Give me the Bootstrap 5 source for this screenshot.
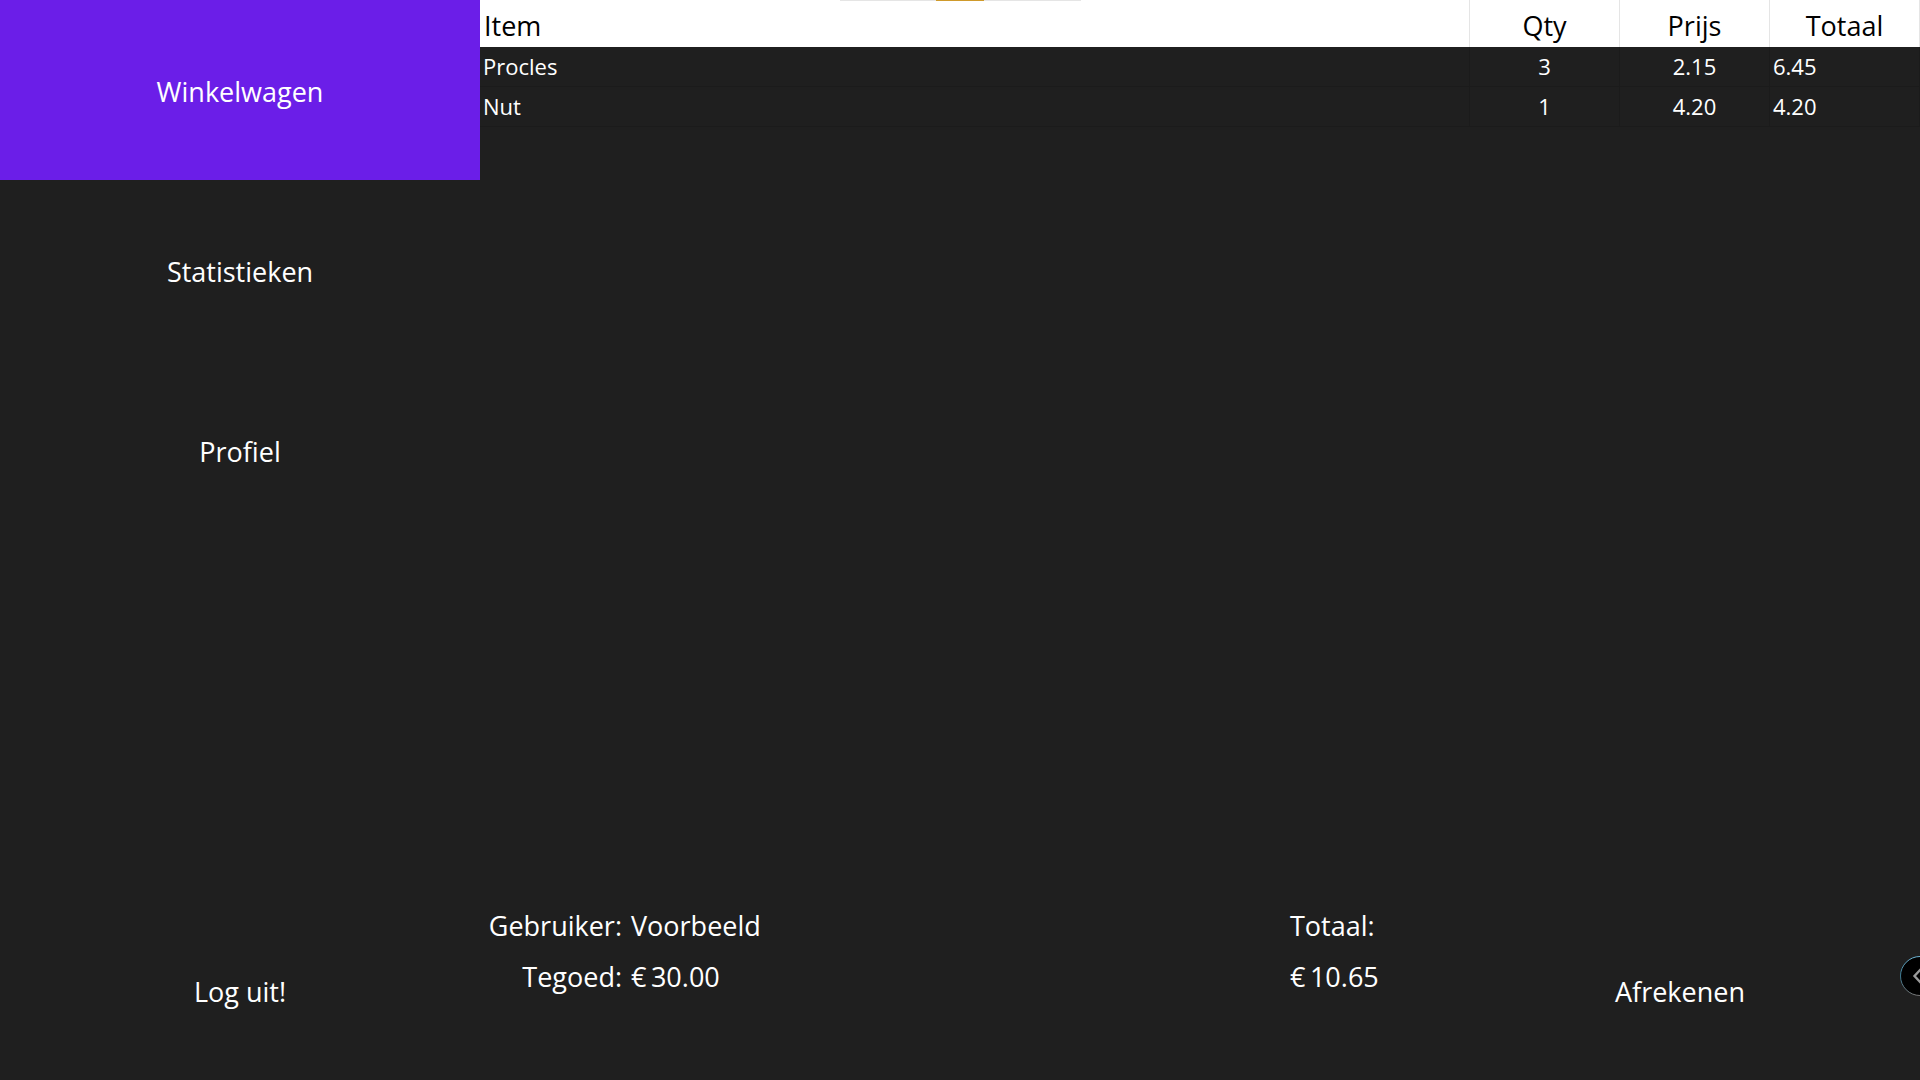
<!DOCTYPE html>
<html lang="nl">
<head>
<meta charset="utf-8">
<meta name="viewport" content="width=device-width, initial-scale=1">
<title>Winkelwagen</title>
<link href="https://cdn.jsdelivr.net/npm/bootstrap@5.3.0/dist/css/bootstrap.min.css" rel="stylesheet">
<style>
  body { background: #1f1f1f; color: #fff; font-family: "Segoe UI", "Open Sans", "Noto Sans", sans-serif; font-size: 27px; line-height: 40px; }
  .side-menu { width: 25%; }
  .tile { height: calc(100vh / 6); padding-top: 10px; border: 0; border-radius: 0; background: transparent; color: #fff; font-size: 27px; line-height: 40px; }
  .tile:hover { background: #2c2c2c; color: #fff; }
  .tile.active, .tile.active:hover { background: #6b1ee8; color: #fff; }
  .cart-table { table-layout: fixed; border-collapse: separate; border-spacing: 0; }
  .cart-table th, .cart-table td { font-weight: 400; border-right: 1px solid #1b1b1b; }
  .cart-table th { height: 47px; padding: 4px 4px 0; background: #fff; color: #000; line-height: 40px; border-right-color: #e5e5e5; }
  .cart-table td { height: 40px; padding: 0 3px; font-size: 22px; line-height: 39px; border-bottom: 1px solid #1b1b1b; }
  .cart-table .num-col { width: 150px; }
  .checkout-bar { height: calc(100vh / 6); }
  .account { display: grid; grid-template-columns: 142px auto; align-content: start; column-gap: 9px; row-gap: 11px; margin: 6px 0 0; }
  .account dd { margin: 0; }
  .account dt { font-weight: 400; }
  .sum-box { width: 150px; margin-top: 6px; gap: 11px; }
  .dock-strip { top: 0; left: 50%; width: 241px; height: 1px; margin-left: -120px; background: #e5e5e5; }
  .dock-strip span { display: block; width: 48px; height: 1px; margin-left: 96px; background: #cf9a2b; }
  .drawer-btn { right: -20px; bottom: 84px; width: 40px; height: 40px; padding: 0; border: 0; background: none; line-height: 0; }
</style>
<script src="https://cdn.jsdelivr.net/npm/bootstrap@5.3.0/dist/js/bootstrap.bundle.min.js"></script>
</head>
<body class="overflow-hidden">
<div class="d-flex vh-100">
  <nav class="side-menu d-flex flex-column flex-shrink-0" aria-label="Menu">
    <button type="button" class="btn tile active">Winkelwagen</button>
    <button type="button" class="btn tile">Statistieken</button>
    <button type="button" class="btn tile">Profiel</button>
    <button type="button" class="btn tile mt-auto">Log uit!</button>
  </nav>
  <main class="d-flex flex-column flex-grow-1">
    <table class="cart-table w-100">
      <colgroup><col><col class="num-col"><col class="num-col"><col class="num-col"></colgroup>
      <thead>
        <tr><th scope="col">Item</th><th scope="col" class="text-center">Qty</th><th scope="col" class="text-center">Prijs</th><th scope="col" class="text-center">Totaal</th></tr>
      </thead>
      <tbody>
        <tr><td>Procles</td><td class="text-center">3</td><td class="text-center">2.15</td><td>6.45</td></tr>
        <tr><td>Nut</td><td class="text-center">1</td><td class="text-center">4.20</td><td>4.20</td></tr>
      </tbody>
    </table>
    <div class="checkout-bar row g-0 mt-auto">
      <div class="col-8 d-flex justify-content-between">
        <dl class="account">
          <dt class="text-end">Gebruiker:</dt><dd>Voorbeeld</dd>
          <dt class="text-end">Tegoed:</dt><dd>€&#8201;30.00</dd>
        </dl>
        <div class="sum-box d-flex flex-column">
          <span>Totaal:</span>
          <span>€&#8201;10.65</span>
        </div>
      </div>
      <button type="button" class="btn tile col-4">Afrekenen</button>
    </div>
  </main>
</div>
<div class="dock-strip position-fixed"><span></span></div>
<button type="button" class="drawer-btn position-fixed" aria-label="Paneel openen">
  <svg width="40" height="40" viewBox="0 0 40 40" fill="none">
    <defs><linearGradient id="rim" x1="0" y1="0" x2="0" y2="1"><stop offset="0" stop-color="#6fb6d6"/><stop offset=".5" stop-color="#3b7890"/><stop offset="1" stop-color="#777"/></linearGradient></defs>
    <circle cx="20" cy="20" r="19.5" fill="#000" stroke="url(#rim)"/>
    <path d="M21 13l-6.500 7 6.500 7" stroke="#9a9a9a" stroke-width="2.400"/>
  </svg>
</button>
</body>
</html>
